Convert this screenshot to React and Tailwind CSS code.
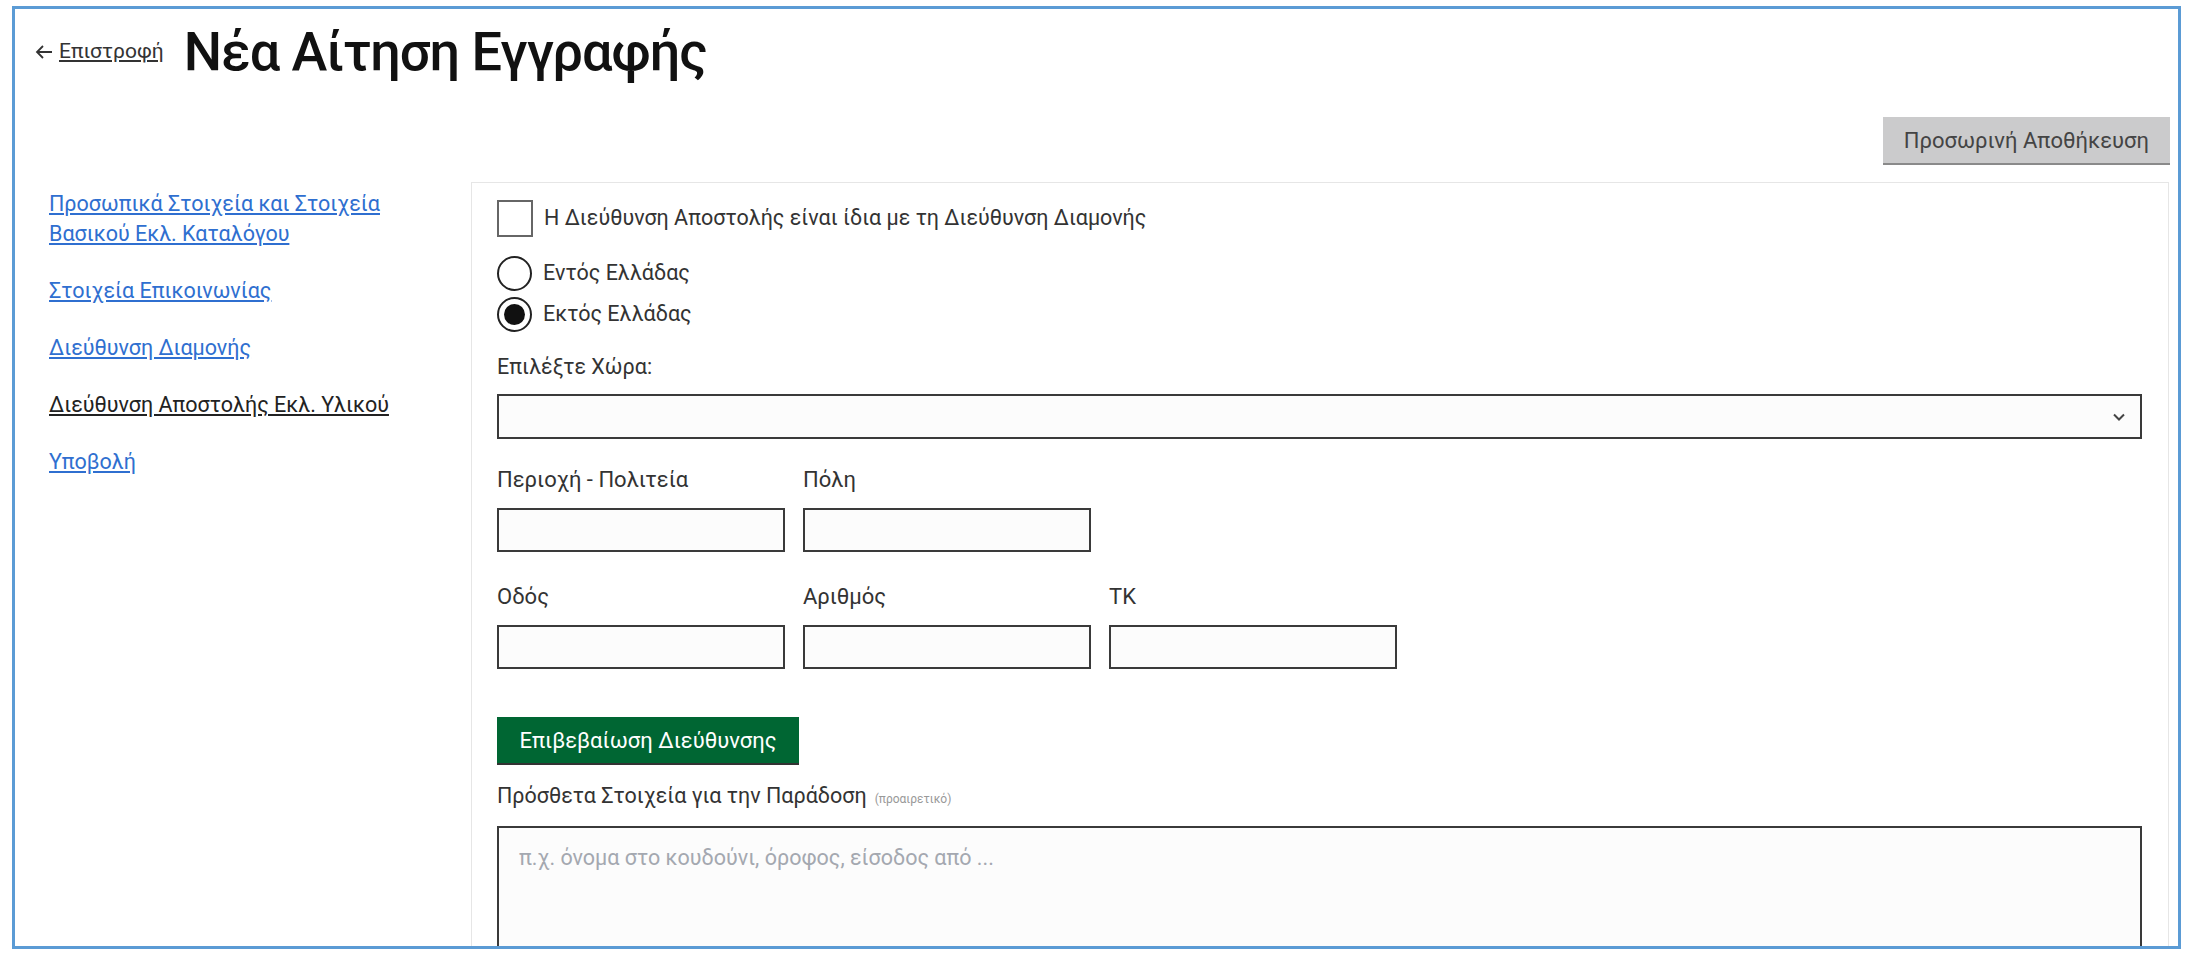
import React from "react";

const font = { fontFamily: "Roboto, 'Noto Sans', sans-serif" };

function Field({ label, className = "" }) {
  return (
    <div className={"flex flex-col " + className}>
      <span className="text-[22px] leading-[28px] text-[#333]">{label}</span>
      <div className="mt-[14px] w-[288px] h-[44px] border-2 border-[#3a3a3a] bg-[#fcfcfc]" />
    </div>
  );
}

export default function App() {
  return (
    <div className="w-[2200px] h-[966px] bg-white pt-[6px] pl-[12px]" style={font}>
      <div className="w-[2169px] h-[943px] border-[3px] border-[#5b9bd5] overflow-hidden flex flex-col">
        {/* header */}
        <div className="flex items-center pl-[20px] pt-[16px] h-[82px]">
          <a className="flex items-center text-[21px] text-[#333] mr-[20px]" href="#">
            <svg width="18" height="16" viewBox="0 0 18 16" fill="none" className="mr-[6px]">
              <path d="M17 8 H2 M8 2 L2 8 L8 14" stroke="#333" strokeWidth="1.8" />
            </svg>
            <span className="underline">Επιστροφή</span>
          </a>
          <h1 className="text-[54px] font-medium leading-none text-[#111] tracking-[-1px]">Νέα Αίτηση Εγγραφής</h1>
        </div>
        <div className="flex justify-end pr-[8px] pt-[38px]">
          <button className="h-[48px] px-[21px] bg-[#cbcbcc] border-b-2 border-[#8a8a8a] text-[22px] text-[#444]">
            Προσωρινή Αποθήκευση
          </button>
        </div>
        <div className="flex flex-1 mt-[17px]">
          {/* nav */}
          <nav className="w-[456px] pl-[34px] pt-[7px] flex flex-col gap-[27px] text-[21.5px] leading-[30px]">
            <a href="#" className="underline text-[#2f6fd0]">
              Προσωπικά Στοιχεία και Στοιχεία
              <br />
              Βασικού Εκλ. Καταλόγου
            </a>
            <a href="#" className="underline text-[#2f6fd0]">Στοιχεία Επικοινωνίας</a>
            <a href="#" className="underline text-[#2f6fd0]">Διεύθυνση Διαμονής</a>
            <a href="#" className="underline text-[#222]">Διεύθυνση Αποστολής Εκλ. Υλικού</a>
            <a href="#" className="underline text-[#2f6fd0]">Υποβολή</a>
          </nav>
          {/* panel */}
          <div className="w-[1698px] border border-[#e6e6e6] border-b-0 pl-[25px] pr-[26px] pt-[17px] flex flex-col">
            <label className="flex items-center">
              <span className="w-[36px] h-[37px] border-2 border-[#666] bg-white" />
              <span className="ml-[11px] text-[21.5px] text-[#333]">
                Η Διεύθυνση Αποστολής είναι ίδια με τη Διεύθυνση Διαμονής
              </span>
            </label>
            <div className="mt-[19px] flex flex-col gap-[6px]">
              <label className="flex items-center">
                <span className="w-[35px] h-[35px] rounded-full border-2 border-[#222] bg-white" />
                <span className="ml-[11px] text-[21.5px] text-[#333]">Εντός Ελλάδας</span>
              </label>
              <label className="flex items-center">
                <span className="w-[35px] h-[35px] rounded-full border-2 border-[#222] bg-white flex items-center justify-center">
                  <span className="w-[21px] h-[21px] rounded-full bg-[#111]" />
                </span>
                <span className="ml-[11px] text-[21.5px] text-[#333]">Εκτός Ελλάδας</span>
              </label>
            </div>
            <span className="mt-[21px] text-[21.5px] leading-[28px] text-[#333]">Επιλέξτε Χώρα:</span>
            <div className="mt-[13px] h-[45px] border-2 border-[#3a3a3a] bg-[#fcfcfc] flex items-center justify-end pr-[14px]">
              <svg width="14" height="10" viewBox="0 0 14 10" fill="none">
                <path d="M2 2.5 L7 7.5 L12 2.5" stroke="#444" strokeWidth="2" />
              </svg>
            </div>
            <div className="mt-[27px] flex gap-[18px]">
              <Field label="Περιοχή - Πολιτεία" />
              <Field label="Πόλη" />
            </div>
            <div className="mt-[31px] flex gap-[18px]">
              <Field label="Οδός" />
              <Field label="Αριθμός" />
              <Field label="ΤΚ" />
            </div>
            <div className="mt-[48px]">
              <button className="h-[48px] w-[302px] bg-[#006633] border-b-2 border-[#333] text-white text-[22px]">
                Επιβεβαίωση Διεύθυνσης
              </button>
            </div>
            <div className="mt-[15px] flex items-baseline">
              <span className="text-[21.5px] text-[#333]">Πρόσθετα Στοιχεία για την Παράδοση</span>
              <span className="ml-[8px] text-[12px] text-[#999]">(προαιρετικό)</span>
            </div>
            <div className="mt-[14px] h-[200px] border-2 border-[#3a3a3a] bg-[#fcfcfc] pl-[20px] pt-[14px] text-[21.5px] text-[#a4a8b0]">
              π.χ. όνομα στο κουδούνι, όροφος, είσοδος από ...
            </div>
          </div>
        </div>
      </div>
    </div>
  );
}
